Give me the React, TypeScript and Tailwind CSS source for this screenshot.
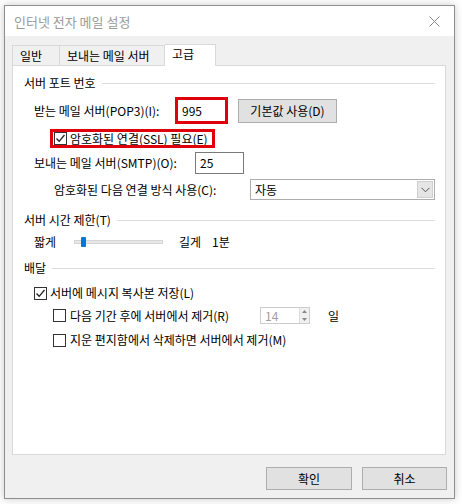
import React from "react";

const font = { fontFamily: '"Noto Sans CJK KR", "Noto Sans", sans-serif' };

function Check({ checked }: { checked?: boolean }) {
  return (
    <div className="w-[13px] h-[13px] border border-[#333] bg-white flex items-center justify-center shrink-0">
      {checked && (
        <svg width="11" height="11" viewBox="0 0 11 11">
          <path d="M1.5 5.5 L4.2 8.3 L9.5 2" fill="none" stroke="#222" strokeWidth="1.3" />
        </svg>
      )}
    </div>
  );
}

function GroupHeader({ label, className }: { label: string; className?: string }) {
  return (
    <div className={"flex items-center h-[18px] pl-[11px] pr-[10px] " + (className ?? "")}>
      <span className="leading-[18px] whitespace-nowrap">{label}</span>
      <div className="flex-1 h-px bg-[#dcdcdc] ml-[6px]" />
    </div>
  );
}

export default function App() {
  return (
    <div className="w-[462px] h-[504px] bg-white pt-[5px] pl-[4px] text-[12px] text-black" style={font}>
      <div className="w-[451px] h-[494px] border border-[#8e8e8e] bg-[#f0f0f0] shadow-[0_0_8px_rgba(0,0,0,0.22)] flex flex-col">
        {/* title bar */}
        <div className="h-[30px] bg-white flex items-center justify-between pl-[9px] pr-[10px]">
          <span className="text-[13px] text-[#9a9a9a] leading-none">인터넷 전자 메일 설정</span>
          <svg width="11" height="11" viewBox="0 0 11 11" className="mr-[4px]">
            <path d="M0.5 0.5 L10.5 10.5 M10.5 0.5 L0.5 10.5" stroke="#888" strokeWidth="1" />
          </svg>
        </div>
        {/* tabs */}
        <div className="pl-[7px] pt-[7px] flex items-end h-[29px]">
          <div className="h-[20px] w-[48px] border border-b-0 border-[#d9d9d9] flex items-center pl-[7px] leading-none">일반</div>
          <div className="h-[20px] w-[105px] border border-l-0 border-b-0 border-[#d9d9d9] flex items-center pl-[7px] leading-none">보내는 메일 서버</div>
          <div className="h-[22px] w-[51px] border border-l-0 border-b-0 border-[#d9d9d9] bg-white flex items-center pl-[7px] pb-[3px] leading-none relative top-px">고급</div>
        </div>
        {/* panel */}
        <div className="ml-[7px] w-[434px] h-[390px] border border-[#d9d9d9] bg-white flex flex-col pt-[8px]">
          <GroupHeader label="서버 포트 번호" />
          <div className="mt-[5px] h-[27px] flex items-center">
            <span className="pl-[21px] w-[162px] whitespace-nowrap">받는 메일 서버(POP3)(I):</span>
            <div className="w-[53px] h-[27px] border-[3px] border-[#e0000b] flex items-center pl-[4px]">995</div>
            <div className="ml-[10px] w-[99px] h-[24px] bg-[#e1e1e1] border border-[#adadad] flex items-center justify-center">기본값 사용(D)</div>
          </div>
          <div className="mt-[5px] h-[19px] flex items-center pl-[37px]">
            <div className="h-[19px] w-[165px] border-[3px] border-[#e0000b] flex items-center pl-[1px] overflow-hidden">
              <Check checked />
              <span className="ml-[3px] whitespace-nowrap leading-none">암호화된 연결(SSL) 필요(E)</span>
            </div>
          </div>
          <div className="mt-[4px] h-[22px] flex items-center">
            <span className="pl-[21px] w-[182px] whitespace-nowrap">보내는 메일 서버(SMTP)(O):</span>
            <div className="w-[49px] h-[22px] border border-[#7a7a7a] flex items-center pl-[4px]">25</div>
          </div>
          <div className="mt-[5px] h-[21px] flex items-center">
            <span className="pl-[41px] w-[237px] whitespace-nowrap">암호화된 다음 연결 방식 사용(C):</span>
            <div className="w-[185px] h-[21px] border border-[#adadad] flex items-center justify-between pl-[4px] pr-px">
              <span>자동</span>
              <div className="w-[16px] h-[17px] bg-[#e5e5e5] border border-[#cfcfcf] flex items-center justify-center">
                <svg width="9" height="6" viewBox="0 0 9 6">
                  <path d="M0.5 0.8 L4.5 4.8 L8.5 0.8" fill="none" stroke="#555" strokeWidth="1" />
                </svg>
              </div>
            </div>
          </div>
          <GroupHeader label="서버 시간 제한(T)" className="mt-[11px]" />
          <div className="mt-[4px] h-[18px] flex items-center">
            <span className="pl-[21px] w-[61px] whitespace-nowrap">짧게</span>
            <div className="relative w-[89px] h-[4px] bg-[#e7e7e7] border border-[#d6d6d6]">
              <div className="absolute left-[6px] top-[-4px] w-[5px] h-[10px] bg-[#0078d7] rounded-[1px]" />
            </div>
            <span className="ml-[16px]">길게</span>
            <span className="ml-[11px]">1분</span>
          </div>
          <GroupHeader label="배달" className="mt-[8px]" />
          <div className="mt-[7px] h-[18px] flex items-center pl-[21px]">
            <Check checked />
            <span className="ml-[3px] whitespace-nowrap">서버에 메시지 복사본 저장(L)</span>
          </div>
          <div className="mt-[5px] h-[17px] flex items-center pl-[40px]">
            <Check />
            <span className="ml-[4px] w-[190px] whitespace-nowrap">다음 기간 후에 서버에서 제거(R)</span>
            <div className="w-[50px] h-[17px] border border-[#cccccc] flex items-center justify-between pl-[4px]">
              <span className="text-[#a0a0a0]">14</span>
              <div className="w-[10px] h-[15px] flex flex-col bg-[#f0f0f0] border-l border-[#dcdcdc]">
                <div className="flex-1 flex items-center justify-center">
                  <svg width="5" height="3" viewBox="0 0 5 3"><path d="M0 3 L2.5 0 L5 3 Z" fill="#888" /></svg>
                </div>
                <div className="flex-1 flex items-center justify-center">
                  <svg width="5" height="3" viewBox="0 0 5 3"><path d="M0 0 L2.5 3 L5 0 Z" fill="#888" /></svg>
                </div>
              </div>
            </div>
            <span className="ml-[18px]">일</span>
          </div>
          <div className="mt-[7px] h-[18px] flex items-center pl-[40px]">
            <Check />
            <span className="ml-[4px] whitespace-nowrap">지운 편지함에서 삭제하면 서버에서 제거(M)</span>
          </div>
        </div>
        {/* buttons */}
        <div className="flex justify-end gap-[10px] pr-[7px] mt-[12px]">
          <div className="w-[86px] h-[23px] bg-[#e1e1e1] border border-[#adadad] flex items-center justify-center">확인</div>
          <div className="w-[85px] h-[23px] bg-[#e1e1e1] border border-[#adadad] flex items-center justify-center">취소</div>
        </div>
      </div>
    </div>
  );
}
